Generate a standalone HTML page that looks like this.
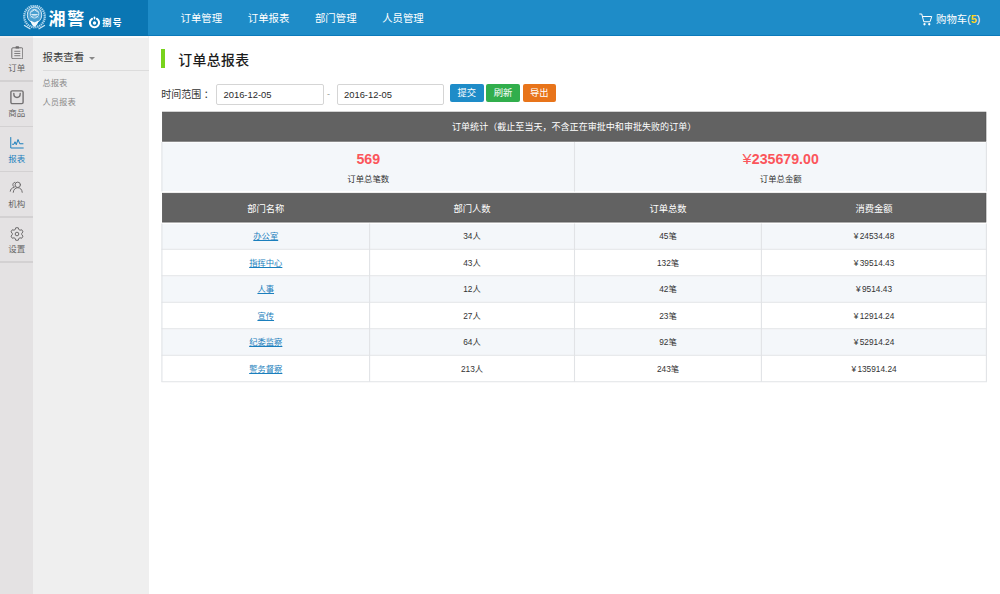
<!DOCTYPE html>
<html lang="zh-CN">
<head>
<meta charset="utf-8">
<title>订单总报表</title>
<style>
*{box-sizing:border-box;margin:0;padding:0}
html,body{width:1000px;height:594px;overflow:hidden;background:#fff}
body{font-family:"Liberation Sans","Noto Sans CJK SC",sans-serif;color:#333;position:relative;font-size:8.3px}
a{color:inherit;text-decoration:none}
.hd{position:absolute;left:0;top:0;width:1000px;height:36px;background:#1e8cc8;border-bottom:1px solid #0b7abb}
.hd .logo{position:absolute;left:0;top:0;width:148.2px;height:36px;background:#0a76b3;border-bottom:1px solid #076fab}
.nm{position:absolute;left:48.6px;top:9.4px;font-size:17px;line-height:21px;font-weight:bold;color:#fff;letter-spacing:1.6px;white-space:nowrap}
.nm2{position:absolute;left:102.3px;top:16.6px;font-size:9.2px;line-height:12px;font-weight:bold;color:#fff;letter-spacing:1.1px;white-space:nowrap}
.nav{position:absolute;left:180.6px;top:0;height:36px;display:flex}
.nav a{display:block;color:#fff;font-size:10.4px;line-height:38.4px;width:67.2px;white-space:nowrap}
.cart{position:absolute;left:936px;top:0;color:#fff;font-size:10.4px;line-height:38.4px;white-space:nowrap}
.cart b{color:#ffd21e;font-weight:bold;font-size:11px}
.cart-ic{position:absolute;left:918.5px;top:12.5px}
.sb1{position:absolute;left:0;top:36px;width:33px;height:558px;background:#e4e2e3}
.sb1 .it{position:absolute;left:0;width:33.5px;text-align:center;color:#666;font-size:8.5px}
.sb1 .sep{position:absolute;left:0;width:33.5px;height:1.6px;background:#d3d1d2}
.sb1 .it span{position:absolute;left:0;width:33.5px;line-height:12px}
.sb1 .it svg{position:absolute}
.sb1 .it.on{color:#1b7fbd}
.sb2{position:absolute;left:33px;top:36px;width:116px;height:558px;background:#efefef}
.sb2 h3{position:absolute;left:9.5px;top:13.8px;font-weight:normal;font-size:10.4px;line-height:16px;color:#3a3a3a}
.sb2 .car{position:absolute;left:55.5px;top:20.5px;width:0;height:0;border:3px solid transparent;border-top:3px solid #888;border-bottom:0}
.sb2 .ln{position:absolute;left:9.5px;right:0;top:34px;height:1px;background:#dcdcdc}
.sb2 a{position:absolute;left:9.5px;font-size:8.3px;color:#888;line-height:12px}
.main{position:absolute;left:149px;top:36px;right:0;bottom:0;background:#fff}
.tbar{position:absolute;left:161.4px;top:49.2px;width:3.8px;height:19px;background:#78d31c}
.ttl{position:absolute;left:178.3px;top:50.1px;font-size:13.9px;letter-spacing:.35px;font-weight:500;line-height:20px;color:#1c1c1c;white-space:nowrap}
.lbl{position:absolute;left:161.3px;top:84.5px;font-size:10px;line-height:20px;color:#333;white-space:nowrap}
.lbl i{font-style:normal;padding-left:2.4px}
.inp{position:absolute;top:84px;height:20.5px;border:1px solid #d5d5d5;border-radius:2px;background:#fff;font-size:9.4px;line-height:19px;padding-left:6.5px;color:#2a2a2a}
.dash{position:absolute;left:327px;top:84px;font-size:9px;line-height:20px;color:#999}
.btn{position:absolute;top:84px;height:18px;width:33.5px;border-radius:2px;color:#fff;font-size:9.3px;line-height:19.6px;text-align:center}
.tb{position:absolute;left:0;top:0;width:1000px;height:594px}
.tb svg{position:absolute;left:0;top:0}
.th{position:absolute;left:162px;width:824.3px;height:29.5px;color:#fff;font-size:9.05px;line-height:30.2px;text-align:center}
.th span{font-size:9.3px}
.th span,.r span{position:absolute;top:0;text-align:center;white-space:nowrap}
.th span{top:.7px}
.n{position:absolute;top:151px;font-size:14.2px;font-weight:bold;color:#fb555b;line-height:16px;text-align:center;white-space:nowrap}
.t{position:absolute;top:172.7px;font-size:8.4px;color:#333;line-height:12px;text-align:center;white-space:nowrap}
.r{position:absolute;left:162px;width:824.3px;height:26.5px;font-size:8.3px;color:#333;line-height:29.4px}
.c1{left:0;width:207.5px}.c2{left:207.5px;width:205px}.c3{left:412.5px;width:187px}.c4{left:599.5px;width:225px}
.r i{font-style:normal;margin-right:1.4px}
.n i{font-style:normal;font-weight:normal;margin-right:1.2px;display:inline-block;transform:scaleX(1.15)}
.r a{color:#1b7fbd;text-decoration:underline}
</style>
</head>
<body>
<div class="hd">
  <div class="logo">
    <svg class="emb" width="23" height="24.5" viewBox="0 0 46 49" style="position:absolute;left:23.3px;top:5.4px">
      <ellipse cx="23" cy="23" rx="20.5" ry="21.5" fill="none" stroke="#b9dcf1" stroke-width="4.6" stroke-dasharray="2.6 1.5" opacity=".95"/>
      <ellipse cx="23" cy="20" rx="14.5" ry="16" fill="#4a9fd0" stroke="#cfe6f5" stroke-width="2"/>
      <circle cx="23" cy="17.5" r="8.5" fill="none" stroke="#c9e4f4" stroke-width="2"/>
      <path d="M17 13.5 L23 9.5 L29 13.5 M17.5 19 H28.5 M16 24 C19 20.5 27 20.5 30 24" fill="none" stroke="#e6f3fb" stroke-width="1.8" stroke-linecap="round"/>
      <path d="M15 31 L23 35 L31 31 C30.5 37 27.5 41 23 43.5 C18.500 41 15.5 37 15 31 Z" fill="#f4fafd"/>
      <path d="M3 41 L14 47.5 M43 41 L32 47.5" stroke="#cfe6f5" stroke-width="2.6" stroke-linecap="round"/>
    </svg>
    <div class="nm">湘警</div>
    <svg width="13" height="13" viewBox="0 0 26 26" style="position:absolute;left:88.2px;top:15.6px">
      <path d="M8 5.6 A9.2 9.2 0 1 0 18 5.6" fill="none" stroke="#fff" stroke-width="4.2" stroke-linecap="round"/>
      <circle cx="13" cy="14" r="3.4" fill="#fff"/>
      <rect x="11.4" y="1" width="3.2" height="6" rx="1.4" fill="#fff"/>
    </svg>
    <div class="nm2">捌号</div>
  </div>
  <div class="nav"><a>订单管理</a><a>订单报表</a><a>部门管理</a><a>人员管理</a></div>
  <svg class="cart-ic" width="14" height="13" viewBox="0 0 28 26"><g fill="none" stroke="#fff" stroke-width="2" stroke-linecap="round" stroke-linejoin="round"><path d="M1.5 2 H5.5 L9.5 17.5 H22 L25.5 7 H7"/></g><circle cx="11" cy="22.5" r="2.3" fill="#fff"/><circle cx="20.5" cy="22.5" r="2.3" fill="#fff"/></svg>
  <div class="cart">购物车(<b>5</b>)</div>
</div>
<div class="sb1"><div style="position:absolute;left:0;top:0.4px;width:33.5px;height:1.4px;background:#efeded"></div>
  <div class="it" style="top:0.0px;height:44.9px"><svg style="left:10.6px;top:9.6px" width="12.6" height="13.4" viewBox="0 0 25.2 26.8"><g fill="none" stroke="#6d6b6c" stroke-width="2" stroke-linejoin="round"><rect x="1.6" y="3.6" width="22" height="22" rx="2.2"/><path d="M6.6 10.6 H18.6 M6.6 15 H18.6 M6.6 19.4 H18.6" stroke-width="1.7"/></g><rect x="9.1" y="0.6" width="7" height="4.6" rx="1.3" fill="#6d6b6c"/></svg><span style="top:25.6px">订单</span></div>
  <div class="sep" style="top:44.3px"></div>
  <div class="it" style="top:44.9px;height:45.3px"><svg style="left:9.8px;top:9px" width="14" height="15" viewBox="0 0 28 30"><g fill="none" stroke="#737172" stroke-width="2.8" stroke-linecap="round" stroke-linejoin="round"><rect x="1.8" y="1.8" width="24.4" height="25.4" rx="2.6"/><path d="M7.600 7 C7.600 17.500 20.400 17.500 20.400 7"/></g></svg><span style="top:26.1px">商品</span></div>
  <div class="sep" style="top:89.6px"></div>
  <div class="it on" style="top:90.2px;height:45.2px"><svg style="left:9.8px;top:10.8px" width="14" height="12" viewBox="0 0 28 24"><g fill="none" stroke="#1b7fbd" stroke-width="2" stroke-linecap="round" stroke-linejoin="round"><path d="M1.5 1 V22 H26.5"/><path d="M5 14.5 H8 L10 9.5 L12.5 15.5 L16 5 L19.5 13.5 H26"/></g></svg><span style="top:26.5px">报表</span></div>
  <div class="sep" style="top:134.8px"></div>
  <div class="it" style="top:135.4px;height:45.3px"><svg style="left:9.4px;top:9.2px" width="14" height="13" viewBox="0 0 28 26"><g fill="none" stroke="#6d6b6c" stroke-width="2" stroke-linecap="round" stroke-linejoin="round"><circle cx="17.5" cy="7.6" r="5.4"/><path d="M8.5 22.6 C9 16.5 13 13.4 17.5 13.4 C22 13.4 26 16.500 26.5 22.6"/><path d="M11 12 C6.500 11 6 3.800 11.5 2.600"/><path d="M2.500 20.500 C3 16.500 5.500 13.600 9.200 13"/></g></svg><span style="top:26.3px">机构</span></div>
  <div class="sep" style="top:180.1px"></div>
  <div class="it" style="top:180.7px;height:45.3px"><svg style="left:9.8px;top:10.5px" width="14" height="14" viewBox="0 0 28 28"><g fill="none" stroke="#6d6b6c" stroke-width="2" stroke-linejoin="round"><path d="M11.5 1.5 H16.5 L17.5 5 L20 6.4 L23.5 5.5 L26 9.8 L23.5 12.5 V15.5 L26 18.2 L23.5 22.5 L20 21.6 L17.5 23 L16.5 26.5 H11.5 L10.5 23 L8 21.6 L4.5 22.5 L2 18.2 L4.5 15.5 V12.5 L2 9.8 L4.5 5.5 L8 6.4 L10.5 5 Z"/><circle cx="14" cy="14" r="3.6"/></g></svg><span style="top:25.9px">设置</span></div>
  <div class="sep" style="top:225.4px"></div>
</div>
<div class="sb2"><div style="position:absolute;left:0;top:0.4px;width:115px;height:1.4px;background:#fbfbfb"></div>
  <h3>报表查看</h3><i class="car"></i><div class="ln"></div>
  <a style="top:40.6px">总报表</a>
  <a style="top:60px">人员报表</a>
</div>
<div class="tbar"></div>
<div class="ttl">订单总报表</div>
<div class="lbl">时间范围<i>：</i></div>
<div class="inp" style="left:216px;width:108px">2016-12-05</div>
<div class="dash">-</div>
<div class="inp" style="left:336.5px;width:107.5px">2016-12-05</div>
<div class="btn" style="left:450px;background:#1e8cc8">提交</div>
<div class="btn" style="left:486.2px;width:33.8px;background:#31ae4c">刷新</div>
<div class="btn" style="left:522.5px;background:#e8741a">导出</div>
<div class="tb">
<svg width="1000" height="594" viewBox="0 0 1000 594">
<rect x="162.0" y="142.6" width="824.3" height="48.4" fill="#f4f7fa"/>
<rect x="162.0" y="224.00" width="824.3" height="24.80" fill="#f4f7fa"/>
<rect x="162.0" y="276.30" width="824.3" height="25.50" fill="#f4f7fa"/>
<rect x="162.0" y="329.30" width="824.3" height="25.50" fill="#f4f7fa"/>
<g stroke="#e1e3e6" stroke-width="1.1" fill="none">
<path d="M161.4 249.30 H986.9"/><path d="M161.4 275.80 H986.9"/><path d="M161.4 302.30 H986.9"/><path d="M161.4 328.80 H986.9"/><path d="M161.4 355.30 H986.9"/><path d="M161.4 381.80 H986.9"/>
<path d="M161.9 223.5 V381.80"/><path d="M369.6 223.5 V381.80"/><path d="M574.5 223.5 V381.80"/><path d="M761.4 223.5 V381.80"/><path d="M986.4 223.5 V381.80"/><path d="M161.9 142 V191.5"/><path d="M574.5 142 V191.5"/><path d="M986.4 142 V191.5"/>
</g>
<rect x="162.3" y="112.05" width="823.7" height="29.20" fill="#626262" stroke="#4e4e4e" stroke-width=".6"/>
<rect x="162.3" y="193.20" width="823.7" height="28.90" fill="#626262" stroke="#4e4e4e" stroke-width=".6"/>
</svg>
  <div class="th" style="top:111.75px">订单统计（截止至当天，不含正在审批中和审批失败的订单）</div>
  <div class="n" style="left:162px;width:412.5px">569</div>
  <div class="t" style="left:162px;width:412.5px">订单总笔数</div>
  <div class="n" style="left:575px;width:411.5px"><i>¥</i>235679.00</div>
  <div class="t" style="left:575px;width:411.5px">订单总金额</div>
  <div class="th" style="top:192.9px"><span class="c1">部门名称</span><span class="c2">部门人数</span><span class="c3">订单总数</span><span class="c4">消费金额</span></div>
  <div class="r" style="top:222.00px"><span class="c1"><a>办公室</a></span><span class="c2">34人</span><span class="c3">45笔</span><span class="c4"><i>¥</i>24534.48</span></div>
  <div class="r" style="top:248.50px"><span class="c1"><a>指挥中心</a></span><span class="c2">43人</span><span class="c3">132笔</span><span class="c4"><i>¥</i>39514.43</span></div>
  <div class="r" style="top:275.00px"><span class="c1"><a>人事</a></span><span class="c2">12人</span><span class="c3">42笔</span><span class="c4"><i>¥</i>9514.43</span></div>
  <div class="r" style="top:301.50px"><span class="c1"><a>宣传</a></span><span class="c2">27人</span><span class="c3">23笔</span><span class="c4"><i>¥</i>12914.24</span></div>
  <div class="r" style="top:328.00px"><span class="c1"><a>纪委监察</a></span><span class="c2">64人</span><span class="c3">92笔</span><span class="c4"><i>¥</i>52914.24</span></div>
  <div class="r" style="top:354.50px"><span class="c1"><a>警务督察</a></span><span class="c2">213人</span><span class="c3">243笔</span><span class="c4"><i>¥</i>135914.24</span></div>
</div>
</body>
</html>
